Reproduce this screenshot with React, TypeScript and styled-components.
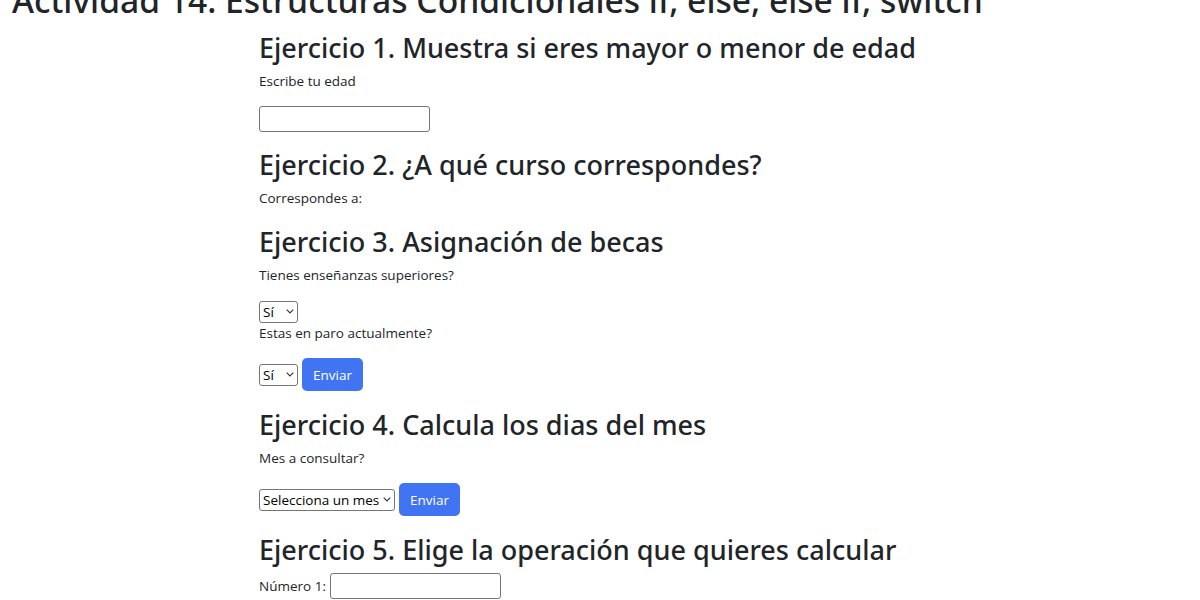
import styled, { createGlobalStyle } from 'styled-components'

const GlobalStyle = createGlobalStyle`
  html, body {
    margin: 0;
    padding: 0;
    background: #fff;
    overflow: hidden;
  }
  body {
    font-family: "Open Sans", "Noto Sans", "Liberation Sans", sans-serif;
    color: #212529;
    font-size: 13.5px;
    line-height: 1.5;
  }
`

const Page = styled.div`
  width: 1200px;
  height: 600px;
  overflow: hidden;
`

const Title = styled.h1`
  font-family: "Noto Sans", "Open Sans", sans-serif;
  font-size: 33.6px;
  font-weight: 500;
  line-height: 41px;
  margin: -20px 0 0;
  padding-left: 12px;
  white-space: nowrap;
`

const Content = styled.main`
  padding: 8px 0 0 259px;
`

const Heading = styled.h2`
  font-family: "Noto Sans", "Open Sans", sans-serif;
  font-size: 27px;
  font-weight: 500;
  line-height: 37px;
  margin: 0 0 5px;
  white-space: nowrap;
`

const Label = styled.p`
  margin: 0 0 14px;
  line-height: 21px;
`

const Block = styled.div<{ $gap?: number }>`
  margin-bottom: ${p => p.$gap ?? 14}px;
`

const Row = styled.div`
  display: flex;
  align-items: center;
  height: 23px;
`

const ActionRow = styled.div`
  display: flex;
  align-items: center;
  gap: 4px;
`

const InlineLabel = styled.label`
  display: flex;
  align-items: center;
  gap: 4px;
`

const TextInput = styled.input`
  box-sizing: border-box;
  width: 171px;
  height: 26px;
  border: 1px solid #767676;
  border-radius: 3px;
  padding: 1px 4px;
  font: inherit;
  margin: 0;
`

const SelectWrap = styled.span`
  position: relative;
  display: inline-flex;
`

const Select = styled.select<{ $w: number }>`
  appearance: none;
  box-sizing: border-box;
  width: ${p => p.$w}px;
  height: 22px;
  border: 1px solid #767676;
  border-radius: 3px;
  background: #fff;
  color: #000;
  font-family: inherit;
  font-size: 13.5px;
  line-height: 20px;
  padding: 0 12px 0 3px;
  margin: 0;
`

const Chevron = styled.svg`
  position: absolute;
  right: 4px;
  top: 8px;
  width: 8px;
  height: 5px;
  pointer-events: none;
`

const Button = styled.button`
  box-sizing: border-box;
  width: 61px;
  height: 33px;
  border: 0;
  border-radius: 5px;
  background: #4174f3;
  color: #fff;
  font-family: inherit;
  font-size: 13.5px;
  padding: 0;
  margin: 0;
`

const meses = [
  'Enero', 'Febrero', 'Marzo', 'Abril', 'Mayo', 'Junio',
  'Julio', 'Agosto', 'Septiembre', 'Octubre', 'Noviembre', 'Diciembre'
]

function Dropdown({ width, children, value }: { width: number; children: React.ReactNode; value: string }) {
  return (
    <SelectWrap>
      <Select $w={width} defaultValue={value}>{children}</Select>
      <Chevron viewBox="0 0 8 5">
        <path d="M0.7 0.7 L4 4 L7.3 0.7" fill="none" stroke="#333" strokeWidth="1.1" />
      </Chevron>
    </SelectWrap>
  )
}

export default function App() {
  return (
    <Page>
      <GlobalStyle />
      <Title>Actividad 14: Estructuras Condicionales if, else, else if, switch</Title>
      <Content>
        <Heading>Ejercicio 1. Muestra si eres mayor o menor de edad</Heading>
        <Label>Escribe tu edad</Label>
        <Block>
          <TextInput type="number" />
        </Block>

        <Heading>Ejercicio 2. ¿A qué curso correspondes?</Heading>
        <Label>Correspondes a:</Label>

        <Heading>Ejercicio 3. Asignación de becas</Heading>
        <Label>Tienes enseñanzas superiores?</Label>
        <Row>
          <Dropdown width={39} value="si">
            <option value="si">Sí</option>
            <option value="no">No</option>
          </Dropdown>
        </Row>
        <Label>Estas en paro actualmente?</Label>
        <Block $gap={15}>
          <ActionRow>
            <Dropdown width={39} value="si">
              <option value="si">Sí</option>
              <option value="no">No</option>
            </Dropdown>
            <Button>Enviar</Button>
          </ActionRow>
        </Block>

        <Heading>Ejercicio 4. Calcula los dias del mes</Heading>
        <Label>Mes a consultar?</Label>
        <Block $gap={15}>
          <ActionRow>
            <Dropdown width={136} value="">
              <option value="">Selecciona un mes</option>
              {meses.map(m => <option key={m} value={m}>{m}</option>)}
            </Dropdown>
            <Button>Enviar</Button>
          </ActionRow>
        </Block>

        <Heading>Ejercicio 5. Elige la operación que quieres calcular</Heading>
        <InlineLabel>
          Número 1:
          <TextInput type="number" />
        </InlineLabel>
      </Content>
    </Page>
  )
}
